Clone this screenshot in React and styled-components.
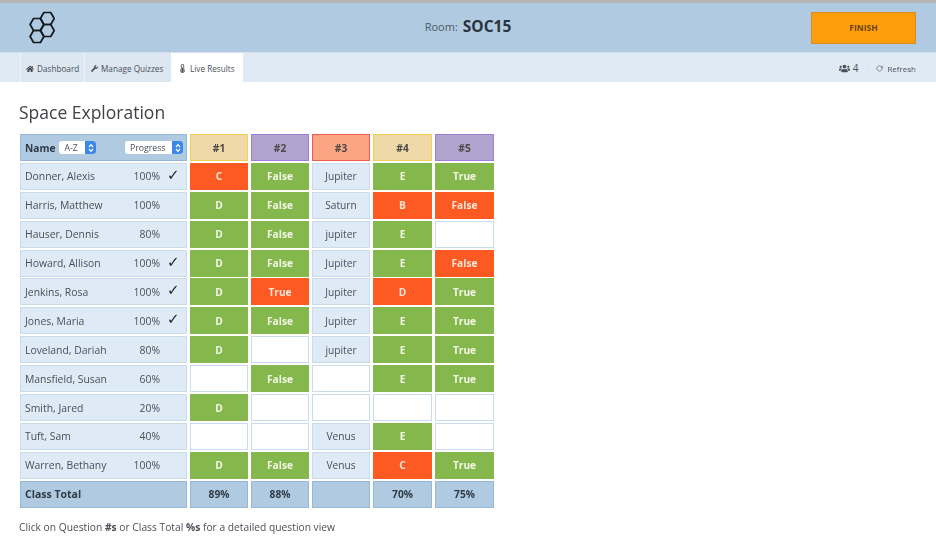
import React from 'react'
import styled, { createGlobalStyle } from 'styled-components'
import { FaHome, FaWrench, FaUsers, FaThermometerHalf } from 'react-icons/fa'
import { FiRotateCw } from 'react-icons/fi'

const students = [
    { name: 'Donner, Alexis', progress: '100%', done: true, answers: ['C:bad', 'False:good', 'Jupiter', 'E:good', 'True:good'] },
    { name: 'Harris, Matthew', progress: '100%', answers: ['D:good', 'False:good', 'Saturn', 'B:bad', 'False:bad'] },
    { name: 'Hauser, Dennis', progress: '80%', answers: ['D:good', 'False:good', 'jupiter', 'E:good', ''] },
    { name: 'Howard, Allison', progress: '100%', done: true, answers: ['D:good', 'False:good', 'Jupiter', 'E:good', 'False:bad'] },
    { name: 'Jenkins, Rosa', progress: '100%', done: true, answers: ['D:good', 'True:bad', 'Jupiter', 'D:bad', 'True:good'] },
    { name: 'Jones, Maria', progress: '100%', done: true, answers: ['D:good', 'False:good', 'Jupiter', 'E:good', 'True:good'] },
    { name: 'Loveland, Dariah', progress: '80%', answers: ['D:good', '', 'jupiter', 'E:good', 'True:good'] },
    { name: 'Mansfield, Susan', progress: '60%', answers: ['', 'False:good', '', 'E:good', 'True:good'] },
    { name: 'Smith, Jared', progress: '20%', answers: ['D:good', '', '', '', ''] },
    { name: 'Tuft, Sam', progress: '40%', answers: ['', '', 'Venus', 'E:good', ''] },
    { name: 'Warren, Bethany', progress: '100%', answers: ['D:good', 'False:good', 'Venus', 'C:bad', 'True:good'] },
]

const questions = [
    { label: '#1', tone: 'tan' },
    { label: '#2', tone: 'purple' },
    { label: '#3', tone: 'salmon' },
    { label: '#4', tone: 'tan' },
    { label: '#5', tone: 'purple' },
]

const totals = ['89%', '88%', '', '70%', '75%']

const hexPoints = (cx, cy, r = 6.9) =>
    [0, 60, 120, 180, 240, 300]
        .map(a => {
            const rad = (a * Math.PI) / 180
            return `${(cx + r * Math.cos(rad)).toFixed(2)},${(cy + r * Math.sin(rad)).toFixed(2)}`
        })
        .join(' ')

const Logo = () => (
    <svg width="30" height="34" viewBox="0 0 30 34" fill="none" stroke="#14181f" strokeWidth="1.7" strokeLinejoin="round">
        <polygon points={hexPoints(19.3, 7.5)} />
        <polygon points={hexPoints(9, 13.5)} />
        <polygon points={hexPoints(19.3, 19.5)} />
        <polygon points={hexPoints(9, 25.5)} />
    </svg>
)

const Stepper = () => (
    <StepperBox>
        <svg width="6" height="10" viewBox="0 0 6 10" fill="none" stroke="#fff" strokeWidth="1.2">
            <path d="M1 4 L3 1.6 L5 4" />
            <path d="M1 6 L3 8.4 L5 6" />
        </svg>
    </StepperBox>
)

const Answer = ({ value }) => {
    const [text, result] = value.split(':')
    if (!text) return <Cell $tone="empty" />
    if (result) return <Cell $tone={result}>{text}</Cell>
    return <Cell $tone="open">{text}</Cell>
}

const App = () => {
    return (
        <>
            <GlobalStyle />
            <Header>
                <LogoSlot><Logo /></LogoSlot>
                <Room>
                    <RoomLabel>Room:</RoomLabel>
                    <RoomCode>SOC15</RoomCode>
                </Room>
                <FinishButton>FINISH</FinishButton>
            </Header>
            <Nav>
                <Tabs>
                    <Tab $width={64} $pad={5}><FaHome size={8} />Dashboard</Tab>
                    <Tab $width={87} $pad={6}><FaWrench size={7} />Manage Quizzes</Tab>
                    <Tab $width={72} $pad={6} $active><FaThermometerHalf size={9} />Live Results</Tab>
                </Tabs>
                <NavRight>
                    <Count><FaUsers size={11} />4</Count>
                    <Refresh><FiRotateCw size={7} />Refresh</Refresh>
                </NavRight>
            </Nav>
            <Main>
                <Title>Space Exploration</Title>
                <Grid>
                    <NameHead>
                        <NameSort>
                            <b>Name</b>
                            <Select $width={37}>A-Z<Stepper /></Select>
                        </NameSort>
                        <Select $width={58}>Progress<Stepper /></Select>
                    </NameHead>
                    {questions.map(q => (
                        <QuestionHead key={q.label} $tone={q.tone}>{q.label}</QuestionHead>
                    ))}
                    {students.map(s => (
                        <React.Fragment key={s.name}>
                            <NameCell>
                                <span>{s.name}</span>
                                <Progress>{s.progress}</Progress>
                                <Check>{s.done ? '✓' : ''}</Check>
                            </NameCell>
                            {s.answers.map((a, i) => <Answer key={i} value={a} />)}
                        </React.Fragment>
                    ))}
                    <TotalLabel>Class Total</TotalLabel>
                    {totals.map((t, i) => <TotalCell key={i}>{t}</TotalCell>)}
                </Grid>
                <Hint>Click on Question <b>#s</b> or Class Total <b>%s</b> for a detailed question view</Hint>
            </Main>
        </>
    )
}

export default App

const GlobalStyle = createGlobalStyle`
    html, body {
        margin: 0;
        background: #fff;
        font-family: "Open Sans", "Liberation Sans", sans-serif;
        color: #3c4348;
    }
    #root {
        filter: blur(0.35px);
    }
`

const Header = styled.header`
    height: 49px;
    border-top: 3px solid #b4b4b6;
    background: #afcae1;
    display: grid;
    grid-template-columns: 1fr auto 1fr;
    align-items: center;
    padding: 0 20px;
`

const LogoSlot = styled.div`
    display: flex;
    align-items: center;
    padding-left: 8px;
`

const Room = styled.div`
    display: flex;
    align-items: center;
    gap: 5px;
    margin-bottom: 3px;
`

const RoomLabel = styled.span`
    font-size: 11px;
    color: #4d5a66;
`

const RoomCode = styled.span`
    font-size: 15.5px;
    font-weight: 700;
    color: #2b323c;
`

const FinishButton = styled.button`
    justify-self: end;
    width: 105px;
    height: 32px;
    background: #ff9e0c;
    border: 1px solid #d48d25;
    color: #6b4510;
    font-family: inherit;
    font-size: 8.5px;
    font-weight: 700;
    padding: 0;
`

const Nav = styled.nav`
    height: 29px;
    background: #e0eaf4;
    border-top: 1px solid #d5e2ee;
    display: flex;
    justify-content: space-between;
    padding: 0 20px;
`

const Tabs = styled.div`
    display: flex;
`

const Tab = styled.div`
    box-sizing: border-box;
    width: ${p => p.$width}px;
    display: flex;
    align-items: center;
    gap: 3px;
    padding: 2px 0 0 ${p => p.$pad}px;
    font-size: 8.2px;
    white-space: nowrap;
    color: #4a5058;
    background: ${p => (p.$active ? '#fff' : '#dde7f1')};
    border-left: 1px solid ${p => (p.$active ? '#fff' : '#eef3f8')};
`

const NavRight = styled.div`
    display: flex;
    align-items: center;
    gap: 9px;
    padding-top: 1px;
`

const Count = styled.span`
    display: flex;
    align-items: center;
    gap: 3px;
    font-size: 10px;
    color: #4a5058;
`

const Refresh = styled.span`
    display: flex;
    align-items: center;
    gap: 4px;
    padding-left: 8px;
    font-size: 8px;
    color: #4a5058;
    border-left: 1px solid #d8e3ee;
`

const Main = styled.main`
    padding: 0 19px;
`

const Title = styled.h1`
    margin: 0;
    padding-top: 18px;
    height: 34px;
    font-size: 17.5px;
    line-height: 24px;
    font-weight: 400;
    color: #3f4347;
`

const Grid = styled.div`
    display: grid;
    width: 474px;
    margin-left: 1px;
    grid-template-columns: 167px 58px 58px 58px 59px 59px;
    grid-auto-rows: 27px;
    column-gap: 3px;
    row-gap: 1.9px;
    font-size: 10.2px;
`

const CellBase = styled.div`
    box-sizing: border-box;
    display: flex;
    align-items: center;
    justify-content: center;
`

const toneStyles = {
    good: 'background:#84b84c;color:#f2f7e6;font-weight:700;',
    bad: 'background:#fc5a22;color:#fde4d4;font-weight:700;',
    open: 'background:#deeaf5;border:1px solid #c9dcec;color:#4a5058;',
    empty: 'background:#fff;border:1px solid #c9dcec;',
}

const Cell = styled(CellBase)`
    ${p => toneStyles[p.$tone]}
`

const headTones = {
    tan: 'background:#efd9a8;border-color:#f0cf55;',
    purple: 'background:#b3a4cf;border-color:#9a82d6;',
    salmon: 'background:#fca582;border-color:#ef5b4c;',
}

const QuestionHead = styled(CellBase)`
    border: 1.5px solid;
    ${p => headTones[p.$tone]}
    color: #4e4a46;
    font-weight: 700;
`

const NameHead = styled(CellBase)`
    justify-content: space-between;
    padding: 0 3px 0 4px;
    background: #afcae1;
    border: 1px solid #94b8d6;
    font-size: 10.2px;
    color: #2f3a45;
`

const NameSort = styled.div`
    display: flex;
    align-items: center;
    gap: 4px;
`

const Select = styled.div`
    position: relative;
    width: ${p => p.$width}px;
    height: 13px;
    box-sizing: border-box;
    padding-left: 5px;
    background: #fff;
    border-radius: 3px;
    font-size: 8.7px;
    line-height: 15px;
    color: #4a5058;
`

const StepperBox = styled.span`
    position: absolute;
    top: 0;
    right: 0;
    width: 11px;
    height: 13px;
    display: flex;
    align-items: center;
    justify-content: center;
    background: #3d87e6;
    border-radius: 0 3px 3px 0;
`

const NameCell = styled(CellBase)`
    justify-content: flex-start;
    padding-left: 4px;
    background: #deeaf5;
    border: 1px solid #c9dcec;
    color: #4a5058;
    font-size: 10.4px;

    span:first-child {
        flex: 1;
    }
`

const Progress = styled.span`
    width: 40px;
    text-align: right;
`

const Check = styled.span`
    width: 26px;
    padding-left: 7px;
    box-sizing: border-box;
    font-family: "DejaVu Sans", sans-serif;
    font-size: 15px;
    font-weight: 700;
    line-height: 13px;
    color: #22262a;
    position: relative;
    top: -1px;
`

const TotalCell = styled(CellBase)`
    background: #afcae1;
    border: 1px solid #94b8d6;
    color: #2f3a45;
    font-weight: 700;
`

const TotalLabel = styled(TotalCell)`
    justify-content: flex-start;
    padding-left: 4px;
    font-size: 10.5px;
`

const Hint = styled.p`
    margin: 13px 0 0;
    font-size: 10.25px;
    line-height: 13px;
    color: #4a5058;
`
